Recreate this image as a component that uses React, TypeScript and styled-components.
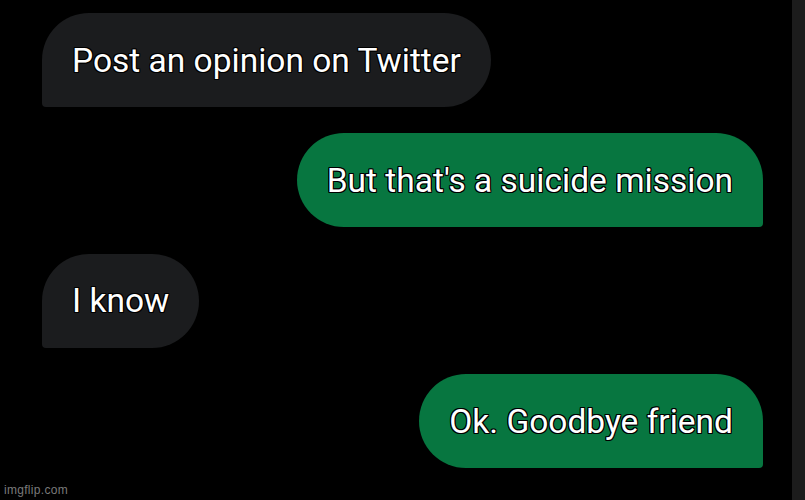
import styled, { createGlobalStyle } from "styled-components";

const GlobalStyle = createGlobalStyle`
    html, body {
        margin: 0;
        padding: 0;
        background: #000;
    }
    #root {
        width: 805px;
        height: 500px;
        overflow: hidden;
    }
`

type Message = { text: string, mine: boolean }

const messages: Message[] = [
    { text: "Post an opinion on Twitter", mine: false },
    { text: "But that's a suicide mission", mine: true },
    { text: "I know", mine: false },
    { text: "Ok. Goodbye friend", mine: true },
]

const App = () => {
    return(
        <Screen>
            <GlobalStyle/>
            <Thread>
                {messages.map((msg, i) => (
                    <Bubble key={i} $mine={msg.mine}>{msg.text}</Bubble>
                ))}
            </Thread>
            <ScrollStrip/>
            <Watermark>imgflip.com</Watermark>
        </Screen>
    )
}
export default App

const Screen = styled.main`
    position: relative;
    display: flex;
    width: 805px;
    height: 500px;
    background: #000;
`

const Thread = styled.section`
    flex: 1;
    display: flex;
    flex-direction: column;
    gap: 26.4px;
    padding: 13px 29px 0 42px;
`

const Bubble = styled.div<{ $mine: boolean }>`
    align-self: ${p => p.$mine ? 'flex-end' : 'flex-start'};
    box-sizing: border-box;
    height: 94px;
    display: flex;
    align-items: center;
    padding: 0 30px 0 30px;
    background-color: ${p => p.$mine ? '#077640' : '#1b1c1e'};
    border-radius: ${p => p.$mine ? '47px 47px 4px 47px' : '47px 47px 47px 4px'};
    font-family: Roboto, "Liberation Sans", sans-serif;
    font-size: 33.5px;
    color: #fff;
    white-space: nowrap;
    text-shadow:
        -1px -1px 0 #000, 1px -1px 0 #000, -1px 1px 0 #000, 1px 1px 0 #000,
        0 -1px 0 #000, 0 1px 0 #000, -1px 0 0 #000, 1px 0 0 #000;
`

const ScrollStrip = styled.div`
    width: 13px;
    background: #1c1c1c;
`

const Watermark = styled.span`
    position: absolute;
    left: 4px;
    bottom: 3px;
    font-family: "Liberation Sans", Arial, sans-serif;
    font-size: 12px;
    color: #7a7a7a;
    letter-spacing: 0.3px;
`
